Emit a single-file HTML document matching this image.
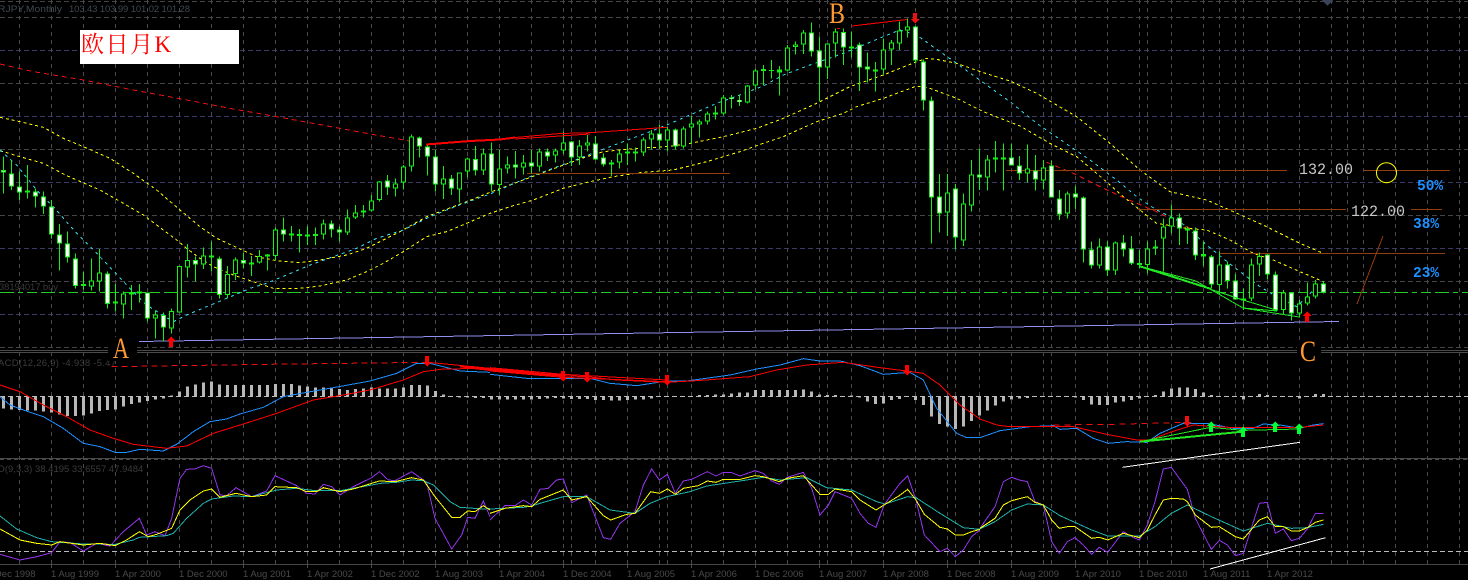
<!DOCTYPE html>
<html><head><meta charset="utf-8"><title>EURJPY Monthly</title>
<style>
html,body{margin:0;padding:0;background:#000;width:1468px;height:580px;overflow:hidden}
svg{display:block;position:absolute;left:0;top:0}
polyline,path{vector-effect:non-scaling-stroke}
text{shape-rendering:auto}
</style></head><body>
<svg width="1468" height="580" viewBox="0 0 1468 580" shape-rendering="crispEdges" fill="none">
<defs>
<path id="up" d="M0-5.5L4.5-1H2V5H-2V-1H-4.5z"/>
<path id="dn" d="M0 5.5L4.5 1H2V-5H-2V1H-4.5z"/>
</defs>
<rect width="1468" height="580" fill="#000"/>
<!-- horizontal grid -->
<path stroke="#444" stroke-dasharray="5 3" d="M0 1.5H1468M0 17.5H1468M0 83.5H1468M0 149.5H1468M0 215.5H1468M0 281.5H1468M0 347.5H1468"/>
<path stroke="#3a3a66" stroke-dasharray="5 3" d="M0 50.5H1468M0 116.5H1468M0 182.5H1468M0 248.5H1468M0 314.5H1468"/>
<!-- vertical grid -->
<path stroke="#4a4a4a" stroke-dasharray="4 4" d="M19.5 0V564M51.5 0V564M83.5 0V564M115.5 0V564M147.5 0V564M179.5 0V564M211.5 0V564M243.5 0V564M275.5 0V564M307.5 0V564M339.5 0V564M371.5 0V564M403.5 0V564M435.5 0V564M467.5 0V564M499.5 0V564M531.5 0V564M563.5 0V564M595.5 0V564M627.5 0V564M659.5 0V564M691.5 0V564M723.5 0V564M755.5 0V564M787.5 0V564M819.5 0V564M851.5 0V564M883.5 0V564M915.5 0V564M947.5 0V564M979.5 0V564M1011.5 0V564M1043.5 0V564M1075.5 0V564M1107.5 0V564M1139.5 0V564M1171.5 0V564M1203.5 0V564M1235.5 0V564M1267.5 0V564M1299.5 0V564M1331.5 0V564M1363.5 0V564M1395.5 0V564M1427.5 0V564M1459.5 0V564M571.5 0V564M667.5 0V564M827.5 0V564M955.5 0V564M1051.5 0V564M1147.5 0V564M1219.5 0V564M1243.5 0V564M1347.5 0V564"/>
<!-- panel separators -->
<path stroke="#4a4a4a" d="M0 350.5H1468M0 352.5H1468M0 458.5H1468"/>
<path stroke="#4a4a4a" stroke-dasharray="4 3" d="M0 459.5H1468"/>
<path stroke="#444" d="M0 564.5H1468"/>
<path stroke="#4a4a4a" d="M51.5 564V568M115.5 564V568M179.5 564V568M243.5 564V568M307.5 564V568M371.5 564V568M435.5 564V568M499.5 564V568M563.5 564V568M627.5 564V568M691.5 564V568M755.5 564V568M819.5 564V568M883.5 564V568M947.5 564V568M1011.5 564V568M1075.5 564V568M1139.5 564V568M1203.5 564V568M1267.5 564V568"/>
<!-- green dashed level -->
<path stroke="#22cc22" stroke-dasharray="14 4 5 4 10 4" d="M0 292.5H1468"/>
<!-- blue-violet trend -->
<path stroke="#9090f0" d="M139 341.5L1339 321.5"/>
<!-- MAs top panel -->
<g transform="scale(.33333)">
<g stroke="#ffff00" stroke-dasharray="3 3">
<polyline points="0,352 60,365 130,382 190,415 250,440 330,475 400,520 470,570 540,630 600,680 650,715 720,747 770,770 830,782 900,788 960,780 1040,765 1100,745 1200,695 1280,650 1400,605 1470,577 1570,540 1650,510 1760,470 1810,455 1910,445 2000,440 2070,430 2170,410 2270,385 2350,355 2450,310 2550,260 2650,225 2750,185 2780,175 2810,178 2870,190 2950,218 3030,243 3110,280 3230,350 3330,430 3420,510 3510,575 3620,600 3700,635 3800,680 3900,730 3965,758"/>
<polyline points="0,452 60,470 130,490 200,527 300,570 370,610 430,645 490,690 530,720 560,745 600,775 640,800 700,825 760,845 820,865 900,865 960,858 1040,840 1100,815 1150,790 1210,755 1280,710 1340,695 1400,670 1470,640 1530,620 1600,600 1690,565 1770,545 1840,530 1920,518 2020,510 2120,485 2220,455 2290,430 2350,410 2450,365 2530,340 2570,320 2650,295 2750,258 2790,265 2870,295 2950,335 3060,378 3150,430 3230,470 3290,520 3370,590 3470,670 3560,685 3620,690 3690,720 3760,760 3820,780 3900,815 3970,845"/>
</g>
<polyline stroke="#33ddee" stroke-dasharray="3 4" points="0,450 50,495 110,570 160,620 230,700 300,770 380,855 440,915 520,965 560,945 620,920 680,895 750,865 800,850 860,825 930,795 1000,770 1070,745 1130,715 1210,690 1290,650 1370,618 1470,582 1520,560 1590,530 1700,490 1790,455 1870,425 1950,395 2000,375 2070,345 2150,310 2220,285 2290,258 2350,225 2430,195 2530,160 2650,110 2700,90 2750,105 2820,155 2870,190 2950,248 3030,305 3110,370 3190,425 3270,480 3350,540 3410,590 3470,630 3540,665 3620,735 3700,800 3780,860 3830,890 3890,920 3940,870 3970,850"/>
<polyline stroke="#ee1111" stroke-dasharray="5 4" points="0,192 100,215 250,240 400,270 550,298 700,327 830,350 950,372 1100,400 1240,425"/>
<polyline stroke="#ee1111" stroke-dasharray="5 4" points="3140,487 3220,520 3300,560 3380,597 3470,635 3560,680 3580,690"/>
</g>
<!-- brown lines -->
<path stroke="#933c0c" d="M1006 170.5H1287M1364 170.5H1450M1138 209.5H1346M1411 209.5H1442M1220 253.5H1445M527 173.5H730M1357 304L1383 236"/>
<!-- candles -->
<g transform="translate(.5 0) scale(1 .33333)">
<path stroke="#14f014" d="M3 470V580M11 482V570M19 515V600M27 495V595M35 565V622M43 575V642M51 600V715M59 672V812M67 695V788M75 760V865M83 815V868M91 775V872M99 747V875M107 815V925M115 852V935M123 875V955M131 855V930M139 852V908M147 877V965M155 932V1015M163 938V1025M171 925V1000M179 798V937M187 732V832M195 770V845M203 742V807M211 725V815M219 770V895M227 798V895M235 772V840M243 758V805M251 768V828M259 750V790M267 762V812M275 683V780M283 653V725M291 678V725M299 687V758M307 678V735M315 682V735M323 658V718M331 662V712M339 680V725M347 628V705M355 615V657M363 615V653M371 585V634M379 543V605M387 525V585M395 535V590M403 495V568M411 403V515M419 410V473M427 430V527M435 450V575M443 498V597M451 525V585M459 517V607M467 473V533M475 438V527M483 445V525M491 427V575M499 450V585M507 470V520M515 453V535M523 465V523M531 450V520M539 445V515M547 445V483M555 445V488M563 395V462M571 423V498M579 420V495M587 405V455M595 408V480M603 460V500M611 480V528M619 452V505M627 430V495M635 442V485M643 412V468M651 390V448M659 373V447M667 380V455M675 385V448M683 380V445M691 348V432M699 358V413M707 335V373M715 318V358M723 285V345M731 285V325M739 283V318M747 255V310M755 205V268M763 195V257M771 180V235M779 198V287M787 135V215M795 125V163M803 90V162M811 68V170M819 110V305M827 130V237M835 85V173M843 85V195M851 95V172M859 127V273M867 158V248M875 186V275M883 115V223M891 120V195M899 65V150M907 55V113M915 78V190M923 178V332M931 290V730M939 522V698M947 522V708M955 552V748M963 580V738M971 480V635M979 445V570M987 465V572M995 423V518M1003 430V572M1011 430V497M1019 468V540M1027 433V548M1035 465V572M1043 480V568M1051 482V592M1059 570V660M1067 575V656M1075 558V627M1083 590V788M1091 725V805M1099 715V805M1107 725V828M1115 725V825M1123 705V770M1131 708V795M1139 750V805M1147 725V820M1155 720V765M1163 655V815M1171 613V700M1179 640V735M1187 680V732M1195 682V780M1203 725V798M1211 765V865M1219 755V882M1227 785V865M1235 822V898M1243 865V930M1251 775V903M1259 758V828M1267 762V838M1275 815V935M1283 870V945M1291 878V962M1299 900V953M1307 848V917M1315 840V895M1323 843V880"/>
<path stroke="#14f014" stroke-width="5" d="M3 510V518M11 520V560M19 560V578M27 572V578M35 575V590M43 590V620M51 620V703M59 703V730M67 730V772M75 775V858M83 852V858M91 842V860M99 817V845M107 820V912M115 905V911M123 880V913M131 877V883M139 874V880M147 877V955M155 943V956M163 945V982M171 933V985M179 798V937M187 780V802M195 780V793M203 767V793M211 767V773M219 775V885M227 822V885M235 778V822M243 780V790M251 788V793M259 768V787M267 763V770M275 688V768M283 688V703M291 700V706M299 702V708M307 703V709M315 702V708M323 670V703M331 670V688M339 688V697M347 653V698M355 637V653M363 631V637M371 602V632M379 544V600M387 541V562M395 551V566M403 500V548M411 410V500M419 413V440M427 440V470M435 470V553M443 535V553M451 536V565M459 518V568M467 475V515M475 477V512M483 460V512M491 460V553M499 505V555M507 493V505M515 493V502M523 487V502M531 488V499M539 454V500M547 455V469M555 451V466M563 427V452M571 424V472M579 436V472M587 428V437M595 430V479M603 473V493M611 488V493M619 461V488M627 454V460M635 454V460M643 418V458M651 401V418M659 401V421M667 388V422M675 389V440M683 386V440M691 371V382M699 365V373M707 340V365M715 337V343M723 292V341M731 293V297M739 300V306M747 256V307M755 212V257M763 207V213M771 210V213M779 209V217M787 142V212M795 134V141M803 97V133M811 98V154M819 152V202M827 131V202M835 95V130M843 96V142M851 140V146M859 134V202M867 200V208M875 208V214M883 148V208M891 127V148M899 92V130M907 80V92M915 80V182M923 185V301M931 301V592M939 590V640M947 577V638M955 566V712M963 610V722M971 523V617M979 523V532M987 478V533M995 472V478M1003 472V478M1011 472V497M1019 497V520M1027 505V520M1035 512V538M1043 502V542M1051 497V592M1059 596V644M1067 580V641M1075 581V592M1083 592V748M1091 748V796M1099 740V796M1107 740V812M1115 727V812M1123 728V748M1131 746V790M1139 789V795M1147 745V795M1155 740V745M1163 680V716M1171 652V680M1179 653V685M1187 686V692M1195 691V767M1203 762V769M1211 770V853M1219 793V855M1227 793V843M1235 842V898M1243 895V902M1251 793V895M1259 768V793M1267 763V823M1275 824V932M1283 877V930M1291 878V940M1299 910V940M1307 890V910M1315 850V890M1323 851V877"/>
<path stroke="#000" stroke-width="3" d="M91 845V857M99 820V842M123 883V910M155 946V953M171 936V982M179 801V934M187 783V799M203 770V790M227 825V882M235 781V819M251 790V791M259 771V784M275 691V765M323 673V700M347 656V695M355 640V650M371 605V629M379 547V597M395 554V563M403 503V545M411 413V497M443 538V550M459 521V565M467 478V512M483 463V509M499 508V552M507 496V502M523 490V499M539 457V497M555 454V463M563 430V449M579 439V469M587 431V434M611 490V491M619 464V485M643 421V455M651 404V415M667 391V419M683 389V437M691 374V379M699 368V370M707 343V362M723 295V338M747 259V304M755 215V254M787 145V209M795 137V138M803 100V130M827 134V199M835 98V127M883 151V205M891 130V145M899 95V127M907 83V89M947 580V635M963 613V719M971 526V614M987 481V530M1027 508V517M1043 505V539M1067 583V638M1099 743V793M1115 730V809M1147 748V792M1163 683V713M1171 655V677M1219 796V852M1251 796V892M1259 771V790M1283 880V927M1299 913V937M1307 893V907M1315 853V887"/>
<path stroke="#fff" stroke-width="3" d="M3 513V515M11 523V557M19 563V575M35 578V587M43 593V617M51 623V700M59 706V727M67 733V769M75 778V855M107 823V909M147 880V952M163 948V979M195 783V790M219 778V882M243 783V787M283 691V700M331 673V685M339 691V694M387 544V559M419 416V437M427 443V467M435 473V550M451 539V562M475 480V509M491 463V550M515 496V499M531 491V496M547 458V466M571 427V469M595 433V476M603 476V490M659 404V418M675 392V437M731 294V296M739 302V304M811 101V151M819 155V199M843 99V139M859 137V199M867 203V205M915 83V179M923 188V298M931 304V589M939 593V637M955 569V709M979 526V529M1011 475V494M1019 500V517M1035 515V535M1051 500V589M1059 599V641M1075 584V589M1083 595V745M1091 751V793M1107 743V809M1123 731V745M1131 749V787M1179 656V682M1195 694V764M1211 773V850M1227 796V840M1235 845V895M1267 766V820M1275 827V929M1291 881V937M1323 854V874"/>
</g>
<!-- red trend lines upper -->
<path stroke="#ff0000" d="M837 28.5H840M852 26L907 19.5"/>
<path stroke="#ff0000" stroke-width="2" d="M426 144.5L470 141L500 139.5L515 137.5"/>
<path stroke="#ff0000" d="M515 137.5L560 133.5L590 132.7L667 127.3M515 139L560 136L590 134"/>
<!-- green fan lines main -->
<path stroke="#22e622" fill="none" d="M1139 266L1219 292L1243 300L1276 310M1139 266L1196 281L1243 308L1277 311M1243 308L1299 317"/>
<path stroke="#22e622" stroke-width="2" fill="none" d="M1139 266L1211 289"/>
<!-- circle -->
<circle cx="1386.5" cy="172.7" r="10" stroke="#ffff00" shape-rendering="auto"/>
<!-- small mark -->
<path fill="#3a4458" d="M1322 0H1333L1327.5 6z"/>
<!-- arrows upper -->
<use href="#up" x="171" y="342" fill="#ff0000"/>
<use href="#up" x="1307" y="317" fill="#ff0000"/>
<use href="#dn" x="915" y="18" fill="#ee1111"/>
<!-- MACD histogram -->
<g transform="translate(.5 345) scale(1 .33333)">
<path stroke="#b8b8b8" stroke-width="3" d="M3 155V190M11 155V193M19 155V195M27 155V197M35 155V197M43 155V200M51 155V203M59 155V208M67 155V213M75 155V213M83 155V212M91 155V205M99 155V198M107 155V195M115 155V193M123 155V185M131 155V177M139 155V172M147 155V168M155 155V163M163 155V160M171 155V152M179 155V140M187 155V125M195 155V118M203 155V112M211 155V110M219 155V118M227 155V120M235 155V120M243 155V120M251 155V120M259 155V120M267 155V120M275 155V117M283 155V117M291 155V117M299 155V122M307 155V125M315 155V128M323 155V128M331 155V130M339 155V132M347 155V135M355 155V132M363 155V130M371 155V128M379 155V130M387 155V130M395 155V130M403 155V128M411 155V120M419 155V120M427 155V122M435 155V138M443 155V148M451 155V153M459 155V158M467 155V158M475 155V159M483 155V159M491 155V163M499 155V163M507 155V163M515 155V163M523 155V163M531 155V163M539 155V162M547 155V160M555 155V159M563 155V160M571 155V162M579 155V162M587 155V162M595 155V165M603 155V165M611 155V167M619 155V167M627 155V165M635 155V163M643 155V163M651 155V160M699 155V150M707 155V150M715 155V148M723 155V148M731 155V145M739 155V142M747 155V142M755 155V135M763 155V135M771 155V135M779 155V135M787 155V135M795 155V135M803 155V133M811 155V140M819 155V148M827 155V150M835 155V150M851 155V152M859 155V158M867 155V170M875 155V177M883 155V175M891 155V165M899 155V162M915 155V165M923 155V180M931 155V215M939 155V237M947 155V245M955 155V252M963 155V245M971 155V228M979 155V212"/>
<path stroke="#b8b8b8" stroke-width="3" d="M987 155V197M995 155V182M1003 155V170M1011 155V163M1019 155V160M1027 155V159M1075 155V158M1083 155V165M1091 155V178M1099 155V180M1107 155V180M1115 155V172M1123 155V170M1131 155V165M1139 155V160M1155 155V150M1163 155V140M1171 155V130M1179 155V128M1187 155V127M1195 155V132M1203 155V143M1211 155V150M1243 155V163M1259 155V147M1267 155V150M1299 155V160M1315 155V147M1323 155V147"/>
</g>
<path stroke="#bbb" stroke-dasharray="5 3" d="M0 396.5H1468"/>
<path stroke="#bbb" stroke-dasharray="5 3" d="M0 551.5H1468"/>
<!-- MACD + Stoch lines (all in zoom units) -->
<g transform="translate(0 345) scale(.33333)" fill="none">
<polyline stroke="#1e90ff" points="0,155 30,180 70,195 130,215 190,250 250,295 300,305 345,322 380,322 420,313 490,318 530,298 580,260 630,230 680,222 720,207 790,187 850,155 920,142 1000,128 1110,108 1190,85 1250,55 1290,55 1380,78 1470,82"/>
<polyline stroke="#ee1111" stroke-dasharray="6 4" points="335,65 800,58 1280,52"/>
<polyline stroke="#ff0000" points="0,120 60,140 130,180 200,215 270,255 340,280 400,298 500,310 560,303 640,265 730,237 830,205 940,165 1030,150 1110,135 1210,105 1270,80 1330,72 1470,70"/>
<polyline stroke="#ff0000" points="1285,52 1470,70"/>
<polyline stroke="#ff0000" style="stroke-width:2" points="1380,64 1470,75"/>
<polyline stroke="#9333ee" points="0,628 60,645 110,635 155,623 180,590 210,593 250,618 290,595 330,603 370,560 418,520 440,570 465,560 495,572 515,520 540,400 560,373 585,372 610,362 635,370 660,450 680,452 708,428 755,455 800,438 825,392 890,422 920,445 945,447 970,418 995,425 1020,450 1060,425 1115,398 1138,380 1165,405 1185,407 1235,380 1280,412 1305,520 1355,612 1385,570 1403,517 1425,520 1450,468 1470,515"/>
<polyline stroke="#20b2aa" points="0,513 50,552 110,578 155,590 250,597 345,598 400,585 418,577 500,572 520,565 560,520 610,475 635,462 700,453 755,455 830,435 890,430 945,437 1020,437 1115,420 1140,415 1190,412 1235,405 1270,407 1300,420 1350,470 1380,487 1450,492 1470,490"/>
<polyline stroke="#ffff00" points="0,552 60,585 110,595 155,600 180,590 250,600 300,595 345,602 380,585 418,560 445,575 470,568 515,550 540,495 570,465 610,438 635,432 660,457 708,445 755,455 800,450 825,425 890,428 920,440 950,440 970,428 1020,440 1060,432 1138,408 1185,410 1235,398 1270,405 1305,455 1355,517 1380,517 1403,498 1425,500 1450,482 1470,495"/>
</g>
<g transform="translate(490 345) scale(.33333)" fill="none">
<polyline stroke="#1e90ff" points="0,88 110,100 300,100 360,115 440,122 530,108 590,108 720,90 800,72 870,60 940,41 990,48 1050,48 1110,62 1180,88 1260,82 1300,105 1340,190 1400,265 1430,278 1470,278"/>
<polyline stroke="#ff0000" points="0,70 220,92 290,95 380,105 530,112 620,107 780,95 860,75 950,60 1060,52 1170,68 1250,78 1300,85 1350,120 1410,180 1470,222"/>
<polyline stroke="#ff0000" style="stroke-width:2" points="0,75 220,92"/>
<polyline stroke="#ff0000" points="0,68 220,88 530,105"/>
<polyline stroke="#ff0000" points="0,78 220,97 530,110"/>
<polyline stroke="#9333ee" points="0,525 45,482 75,482 100,465 125,480 150,433 175,430 200,405 220,402 245,473 290,450 340,578 362,583 390,535 435,500 460,420 485,372 508,405 532,388 556,445 580,408 605,403 652,380 678,393 700,382 725,383 750,393 795,377 820,385 845,408 868,418 892,397 940,382 965,430 990,510 1015,480 1035,440 1085,460 1110,505 1135,535 1158,547 1182,480 1228,418 1253,392 1278,465 1303,570 1350,620 1372,610 1396,635 1420,615 1445,575 1470,555"/>
<polyline stroke="#20b2aa" points="0,492 100,487 125,483 150,475 220,455 290,455 360,495 435,505 480,475 530,455 600,440 650,423 750,408 820,397 870,405 950,398 1010,428 1085,435 1160,470 1185,477 1253,455 1278,458 1350,505 1420,548 1470,553"/>
<polyline stroke="#ffff00" points="0,505 45,490 100,482 125,485 150,463 220,435 245,465 290,455 340,512 362,525 410,508 435,505 482,440 508,445 532,432 556,448 580,430 625,422 652,408 678,412 700,403 750,403 795,392 820,395 868,410 892,400 940,392 965,420 990,448 1015,448 1035,432 1085,440 1110,465 1158,495 1182,480 1228,452 1253,433 1278,465 1303,508 1350,547 1372,552 1396,570 1420,570 1445,560 1470,553"/>
</g>
<g transform="translate(980 345) scale(.33333)" fill="none">
<polyline stroke="#1e90ff" points="0,278 60,257 150,245 220,242 240,253 290,250 340,280 385,295 440,290 500,292 540,265 610,235 680,235 760,250 820,250 850,237 900,240 960,250 1000,240 1030,236"/>
<polyline stroke="#ff0000" points="0,222 50,240 90,245 280,245 380,268 470,285 510,285 570,262 640,240 760,248 860,248 960,247 1030,240"/>
<polyline stroke="#ee1111" stroke-dasharray="6 5" points="220,240 400,238 622,232"/>
<polyline stroke="#22e622" points="480,290 692,247"/>
<polyline stroke="#22e622" style="stroke-width:2" points="480,290 788,260"/>
<polyline stroke="#22e622" points="692,247 788,256 958,252"/>
<polyline stroke="#ffffff" points="427,367 960,292"/>
<polyline stroke="#ffffff" points="690,672 1037,578"/>
<polyline stroke="#9333ee" points="0,550 45,485 70,410 95,397 118,405 142,410 165,470 190,480 215,590 238,625 262,590 285,578 310,600 335,628 358,607 383,622 430,560 455,575 478,585 502,540 525,470 550,372 574,367 598,400 622,433 646,520 694,613 718,586 742,600 766,632 790,625 838,475 862,472 886,565 910,552 934,587 958,580 982,552 1006,505 1030,505"/>
<polyline stroke="#20b2aa" points="0,552 45,530 95,495 142,477 190,480 240,512 335,555 383,573 478,573 525,545 574,505 622,480 694,515 790,558 862,535 934,550 982,548 1030,538"/>
<polyline stroke="#ffff00" points="0,550 45,520 70,480 95,467 142,455 165,472 190,480 215,525 238,550 262,545 285,545 335,580 358,577 383,585 430,565 478,578 502,555 525,510 550,465 574,460 610,462 622,470 646,510 694,547 718,545 766,575 790,582 838,525 862,515 886,545 910,545 934,558 958,558 982,548 1006,532 1030,525"/>
</g>
<!-- MACD arrows -->
<use href="#dn" x="427" y="361" fill="#ff0000"/>
<use href="#dn" x="563" y="376" fill="#ff0000"/>
<use href="#dn" x="587" y="377" fill="#ff0000"/>
<use href="#dn" x="667" y="380" fill="#ff0000"/>
<use href="#dn" x="907" y="370" fill="#ff0000"/>
<use href="#dn" x="1187" y="421" fill="#ee1111"/>
<use href="#up" x="1211" y="427" fill="#00ff33"/>
<use href="#up" x="1243" y="432" fill="#00ff33"/>
<use href="#up" x="1275" y="427" fill="#00ff33"/>
<use href="#up" x="1299" y="429" fill="#00ff33"/>
<!-- title box -->
<rect x="80" y="30" width="159" height="34" fill="#fff"/>
<text x="81" y="52" fill="#ff0000" font-size="23" letter-spacing="1.5" font-family="'Liberation Serif','Noto Serif CJK SC',serif">欧日月K</text>
<!-- header texts -->
<g font-family="'Liberation Sans',sans-serif" font-size="9.5">
<text x="-2" y="12" fill="#3f4850" textLength="64" lengthAdjust="spacingAndGlyphs">RJPY,Monthly</text>
<text x="69" y="12" fill="#3f4850" textLength="121" lengthAdjust="spacing">103.43 103.99 101.02 101.28</text>
<text x="-1" y="290" fill="#383838" textLength="59" lengthAdjust="spacing">38194017 buy</text>
<text x="-2" y="366" fill="#3c3c3c" textLength="118" lengthAdjust="spacing">ACD(12,26,9) -4.938 -5.47</text>
<text x="-2" y="472" fill="#3c3c3c">D(9,3,3) 38.4195 33.6557 47.9484</text>
</g>
<!-- date labels -->
<g font-family="'Liberation Sans',sans-serif" font-size="9.5" fill="#4a4a4a">
<text x="-13" y="577">1 Dec 1998</text>
<text x="51" y="577">1 Aug 1999</text>
<text x="115" y="577">1 Apr 2000</text>
<text x="179" y="577">1 Dec 2000</text>
<text x="243" y="577">1 Aug 2001</text>
<text x="307" y="577">1 Apr 2002</text>
<text x="371" y="577">1 Dec 2002</text>
<text x="435" y="577">1 Aug 2003</text>
<text x="499" y="577">1 Apr 2004</text>
<text x="563" y="577">1 Dec 2004</text>
<text x="627" y="577">1 Aug 2005</text>
<text x="691" y="577">1 Apr 2006</text>
<text x="755" y="577">1 Dec 2006</text>
<text x="819" y="577">1 Aug 2007</text>
<text x="883" y="577">1 Apr 2008</text>
<text x="947" y="577">1 Dec 2008</text>
<text x="1011" y="577">1 Aug 2009</text>
<text x="1075" y="577">1 Apr 2010</text>
<text x="1139" y="577">1 Dec 2010</text>
<text x="1203" y="577">1 Aug 2011</text>
<text x="1267" y="577">1 Apr 2012</text>
</g>
<!-- ABC -->
<rect x="108" y="337" width="29" height="24" fill="#000"/>
<rect x="1297" y="340" width="24" height="24" fill="#000"/>
<g font-family="'Liberation Serif',serif" font-size="30" fill="#ff9933">
<text x="113" y="358" textLength="16" lengthAdjust="spacingAndGlyphs">A</text>
<text x="829" y="23" textLength="16" lengthAdjust="spacingAndGlyphs">B</text>
<text x="1300" y="361" textLength="16" lengthAdjust="spacingAndGlyphs">C</text>
</g>
<!-- price labels -->
<g font-family="'Liberation Mono',monospace" font-size="16" fill="#c8c8c8">
<text x="1299" y="174" textLength="54" lengthAdjust="spacingAndGlyphs">132.00</text>
<text x="1351" y="216" textLength="54" lengthAdjust="spacingAndGlyphs">122.00</text>
</g>
<g font-family="'Liberation Mono',monospace" font-size="14.5" font-weight="bold" fill="#1e90ff">
<text x="1417" y="190">50%</text>
<text x="1413" y="228">38%</text>
<text x="1413" y="277">23%</text>
</g>
</svg>
</body></html>
